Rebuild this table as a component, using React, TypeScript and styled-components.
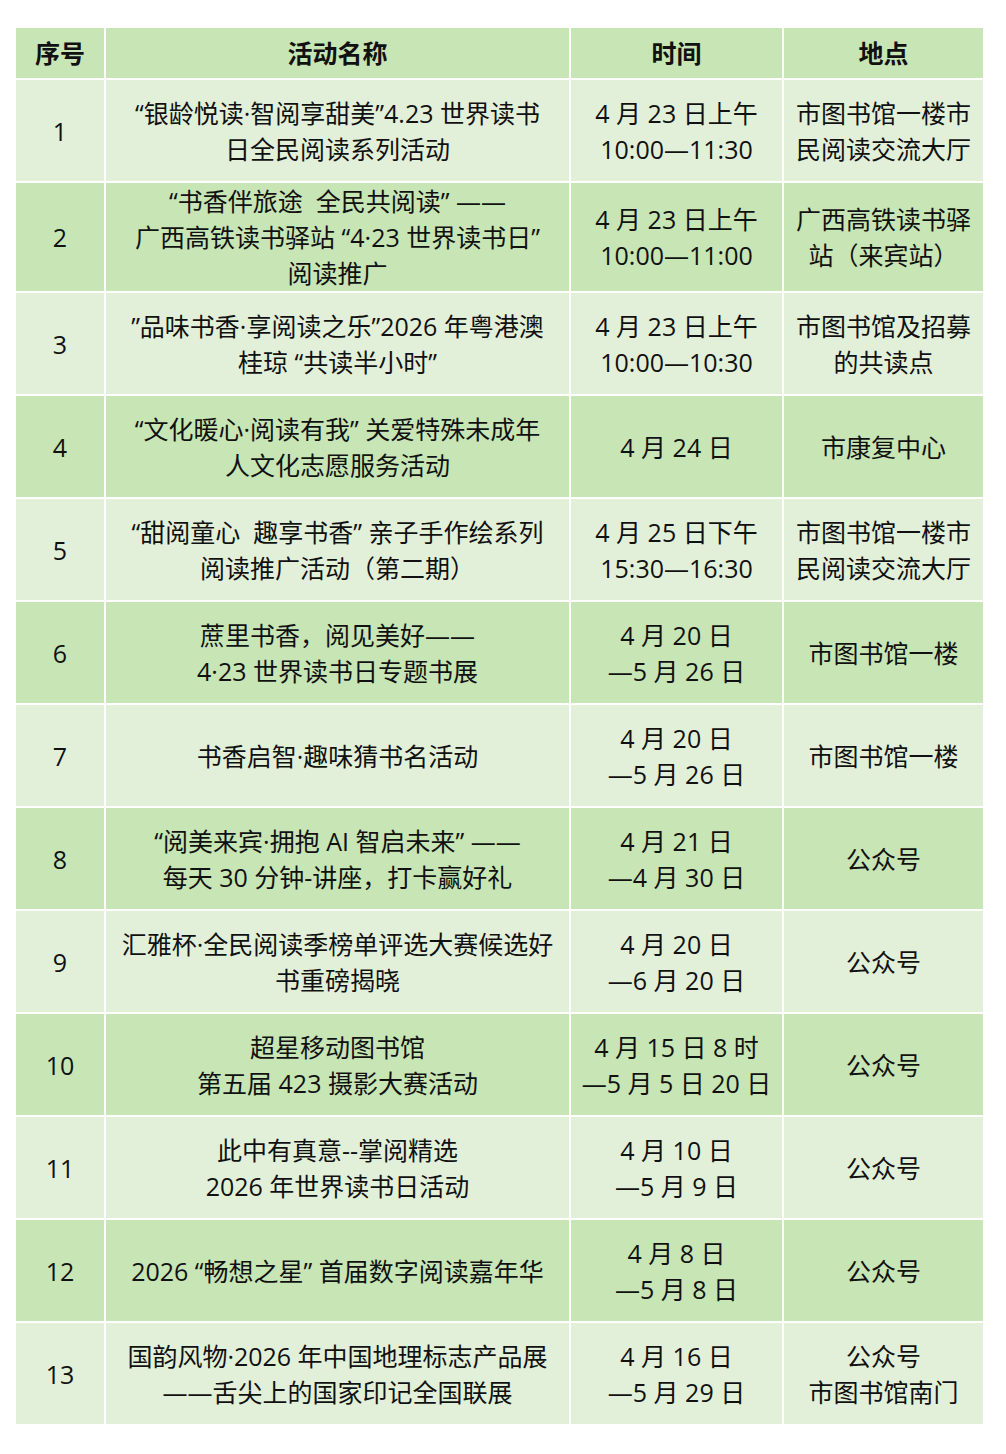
import React from "react";
import styled, { createGlobalStyle } from "styled-components";

const Global = createGlobalStyle`
  html, body { margin: 0; padding: 0; background: #ffffff; }
  body { font-family: "Open Sans", "Noto Sans CJK SC", sans-serif; color: #111; }
`;

const Page = styled.div`
  padding: 28px 23px 30px 16px;
`;

const Table = styled.div`
  display: flex;
  flex-direction: column;
  gap: 2px;
  width: 967px;
`;

const Row = styled.div<{ $h: number }>`
  display: grid;
  grid-template-columns: 88px 463px 211px 199px;
  gap: 2px;
  min-height: ${(p) => p.$h}px;
`;

const Cell = styled.div<{ $dark: boolean; $head?: boolean }>`
  background: ${(p) => (p.$dark ? "#c7e5b5" : "#e3f0d9")};
  display: flex;
  flex-direction: column;
  align-items: center;
  justify-content: center;
  text-align: center;
  font-family: "Open Sans", "Noto Sans CJK SC", sans-serif;
  font-size: 25px;
  line-height: 36px;
  font-weight: ${(p) => (p.$head ? 700 : 400)};
  white-space: pre;
  color: #111;
`;

const Line = styled.span`
  display: block;
`;

type Item = { n: number; name: string[]; time: string[]; place: string[] };

const rows: Item[] = [
  { n: 1, name: ["“银龄悦读·智阅享甜美”4.23 世界读书", "日全民阅读系列活动"], time: ["4 月 23 日上午", "10:00—11:30"], place: ["市图书馆一楼市", "民阅读交流大厅"] },
  { n: 2, name: ["“书香伴旅途  全民共阅读” ——", "广西高铁读书驿站 “4·23 世界读书日”", "阅读推广"], time: ["4 月 23 日上午", "10:00—11:00"], place: ["广西高铁读书驿", "站（来宾站）"] },
  { n: 3, name: ["”品味书香·享阅读之乐”2026 年粤港澳", "桂琼 “共读半小时”"], time: ["4 月 23 日上午", "10:00—10:30"], place: ["市图书馆及招募", "的共读点"] },
  { n: 4, name: ["“文化暖心·阅读有我” 关爱特殊未成年", "人文化志愿服务活动"], time: ["4 月 24 日"], place: ["市康复中心"] },
  { n: 5, name: ["“甜阅童心  趣享书香” 亲子手作绘系列", "阅读推广活动（第二期）"], time: ["4 月 25 日下午", "15:30—16:30"], place: ["市图书馆一楼市", "民阅读交流大厅"] },
  { n: 6, name: ["蔗里书香，阅见美好——", "4·23 世界读书日专题书展"], time: ["4 月 20 日", "—5 月 26 日"], place: ["市图书馆一楼"] },
  { n: 7, name: ["书香启智·趣味猜书名活动"], time: ["4 月 20 日", "—5 月 26 日"], place: ["市图书馆一楼"] },
  { n: 8, name: ["“阅美来宾·拥抱 AI 智启未来” ——", "每天 30 分钟-讲座，打卡赢好礼"], time: ["4 月 21 日", "—4 月 30 日"], place: ["公众号"] },
  { n: 9, name: ["汇雅杯·全民阅读季榜单评选大赛候选好", "书重磅揭晓"], time: ["4 月 20 日", "—6 月 20 日"], place: ["公众号"] },
  { n: 10, name: ["超星移动图书馆", "第五届 423 摄影大赛活动"], time: ["4 月 15 日 8 时", "—5 月 5 日 20 日"], place: ["公众号"] },
  { n: 11, name: ["此中有真意--掌阅精选", "2026 年世界读书日活动"], time: ["4 月 10 日", "—5 月 9 日"], place: ["公众号"] },
  { n: 12, name: ["2026 “畅想之星” 首届数字阅读嘉年华"], time: ["4 月 8 日", "—5 月 8 日"], place: ["公众号"] },
  { n: 13, name: ["国韵风物·2026 年中国地理标志产品展", "——舌尖上的国家印记全国联展"], time: ["4 月 16 日", "—5 月 29 日"], place: ["公众号", "市图书馆南门"] },
];

const Lines = ({ items }: { items: string[] }) => (
  <>
    {items.map((t, i) => (
      <Line key={i}>{t}</Line>
    ))}
  </>
);

export default function App() {
  return (
    <Page>
      <Global />
      <Table>
        <Row $h={50}>
          <Cell $dark $head>序号</Cell>
          <Cell $dark $head>活动名称</Cell>
          <Cell $dark $head>时间</Cell>
          <Cell $dark $head>地点</Cell>
        </Row>
        {rows.map((r, i) => {
          const dark = i % 2 === 1;
          return (
            <Row key={r.n} $h={r.name.length > 2 ? 108 : 101}>
              <Cell $dark={dark}>{r.n}</Cell>
              <Cell $dark={dark}>
                <Lines items={r.name} />
              </Cell>
              <Cell $dark={dark}>
                <Lines items={r.time} />
              </Cell>
              <Cell $dark={dark}>
                <Lines items={r.place} />
              </Cell>
            </Row>
          );
        })}
      </Table>
    </Page>
  );
}
